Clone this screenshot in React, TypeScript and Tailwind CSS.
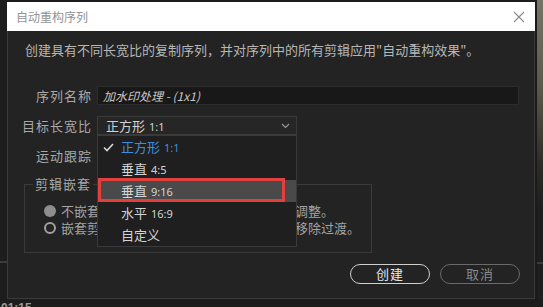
import { useState } from 'react'

const CJK = "font-['Noto_Sans_CJK_SC','Noto_Sans',sans-serif]"

const OPTIONS = [
  { name: '正方形', ratio: '1:1' },
  { name: '垂直', ratio: '4:5' },
  { name: '垂直', ratio: '9:16' },
  { name: '水平', ratio: '16:9' },
  { name: '自定义', ratio: '' },
]

function Label({ children }: { children: string }) {
  return (
    <div className="w-[84px] shrink-0 text-right text-[13px] leading-[19px] tracking-[1px] text-[#a9a9a9]">
      {children}
    </div>
  )
}

function Ratio({ value }: { value: string }) {
  return <span className="ml-[4px] font-['Noto_Sans',sans-serif] text-[11px]">{value}</span>
}

export default function App() {
  const [selected] = useState(0)
  const [hovered] = useState(2)

  return (
    <div className={`flex h-[307px] w-[543px] flex-col overflow-hidden bg-[#1c1c1c] ${CJK}`}>
      <div className="flex h-[299px] shrink-0">
        {/* left strip of the app behind */}
        <div className="flex w-[7px] flex-col bg-[#1d1d1d]">
          <div className="mt-[261px] h-[2px] bg-[#3c3c3c]" />
        </div>

        {/* dialog */}
        <div className="flex w-[528px] flex-col pt-[2px]">
          <div className="flex h-[29px] items-center justify-between bg-white pl-[9px] pr-[8px]">
            <span className="text-[12px] text-[#929292]">自动重构序列</span>
            <svg width="12" height="12" viewBox="0 0 12 12" className="mr-[2px]">
              <path d="M1 1 L11 11 M11 1 L1 11" stroke="#8a8a8a" strokeWidth="1.1" fill="none" />
            </svg>
          </div>

          <div className="flex flex-1 flex-col border-x border-b border-[#3b3b3b] bg-[#232323]">
            <p className="mt-[10px] pl-[17px] text-[13px] leading-[17px] text-[#b6b6b6]">
              创建具有不同长宽比的复制序列，并对序列中的所有剪辑应用"自动重构效果"。
            </p>

            <div className="mt-[28px] flex h-[19px] items-center">
              <Label>序列名称</Label>
              <div className="ml-[5px] flex h-[19px] w-[422px] items-center border border-[#2c2c2c] bg-[#181818] pl-[5px] text-[12px] italic text-[#c8c8c8]">
                加水印处理 - (1x1)
              </div>
            </div>

            <div className="mt-[11px] flex h-[19px] items-center">
              <Label>目标长宽比</Label>
              <div className="relative ml-[5px] w-[200px]">
                <div className="flex h-[19px] items-center justify-between border border-[#3a3a3a] bg-[#262626] pl-[8px] pr-[6px] text-[13px] text-[#d2d2d2]">
                  <span>
                    正方形<Ratio value="1:1" />
                  </span>
                  <svg width="9" height="6" viewBox="0 0 9 6">
                    <path d="M1 1 L4.5 4.5 L8 1" stroke="#9a9a9a" strokeWidth="1.1" fill="none" />
                  </svg>
                </div>

                <div className="absolute left-0 top-[19px] z-10 w-[200px] border border-[#3a3a3a] bg-[#1f1f1f]">
                  {OPTIONS.map((o, i) => (
                    <div
                      key={i}
                      className={`relative flex h-[22px] items-center pl-[23px] text-[13px] ${
                        i === selected ? 'text-[#3f8ddc]' : 'text-[#d4d4d4]'
                      } ${i === hovered ? 'bg-[#4a4a4a]' : ''}`}
                    >
                      {i === selected && (
                        <svg width="11" height="9" viewBox="0 0 11 9" className="absolute left-[5px] top-[7px]">
                          <path d="M1 4.5 L4 7.5 L10 1" stroke="#d8d8d8" strokeWidth="1.6" fill="none" />
                        </svg>
                      )}
                      <span>
                        {o.name}
                        {o.ratio && <Ratio value={o.ratio} />}
                      </span>
                      {i === hovered && (
                        <div className="absolute left-0 top-[-2px] h-[24px] w-[187px] border-[3px] border-[#e2403c]" />
                      )}
                    </div>
                  ))}
                </div>
              </div>
            </div>

            <div className="mt-[11px] flex h-[19px] items-center">
              <Label>运动跟踪</Label>
            </div>

            <fieldset className="ml-[16px] mt-[12px] h-[76px] w-[348px] border border-[#3a3a3a] pl-[8px]">
              <legend className="px-[2px] text-[13px] leading-[14px] tracking-[1px] text-[#a9a9a9]">剪辑嵌套</legend>
              <div className="mt-[11px] flex flex-col text-[13px] text-[#a2a2a2]">
                <div className="flex h-[17px] items-center whitespace-nowrap">
                  <span className="ml-[11px] h-[12px] w-[12px] rounded-full bg-[#8e8e8e]" />
                  <span className="ml-[5px]">不嵌套剪辑，将效果应用于各剪辑并可以调整。</span>
                </div>
                <div className="flex h-[17px] items-center whitespace-nowrap">
                  <span className="ml-[11px] h-[12px] w-[12px] rounded-full border-2 border-[#a0a0a0]" />
                  <span className="ml-[5px]">嵌套剪辑，将所有剪辑嵌套到新序列中并移除过渡。</span>
                </div>
              </div>
            </fieldset>

            <div className="mt-[11px] flex justify-end gap-[10px] pr-[14px]">
              <button className="flex h-[20px] w-[80px] items-center justify-center rounded-full border-[1.5px] border-[#cfcfcf] text-[13px] tracking-[1px] text-[#e8e8e8]">
                创建
              </button>
              <button className="flex h-[20px] w-[80px] items-center justify-center rounded-full border-[1.5px] border-[#6a6a6a] text-[13px] tracking-[1px] text-[#8a8a8a]">
                取消
              </button>
            </div>
          </div>
        </div>

        {/* right strip of the app behind */}
        <div className="flex flex-1">
          <div className="w-[2px] bg-[#1a1a1a]" />
          <div className="flex flex-1 flex-col bg-[linear-gradient(to_bottom,#767463_0%,#5a5849_30%,#2c2b27_55%,#1e1e1e_70%)]">
            <div className="mt-[262px] h-[2px] bg-[#3a3a3a]" />
          </div>
        </div>
      </div>

      <div className="pl-[1px] pt-[2px] font-['Liberation_Sans',sans-serif] text-[12px] font-bold leading-[14px] text-[#9a9a9a]">
        01:15
      </div>
    </div>
  )
}
